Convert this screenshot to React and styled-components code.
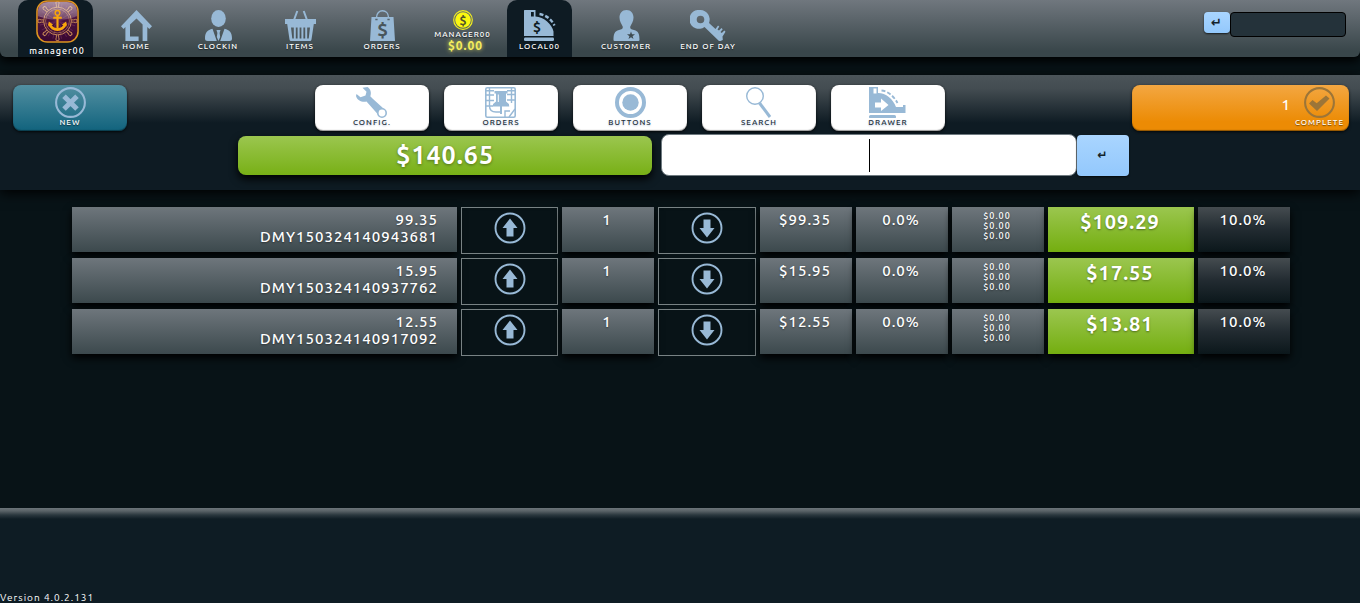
import React from 'react';
import styled, { createGlobalStyle, css } from 'styled-components';

const GlobalStyle = createGlobalStyle`
  * { box-sizing: border-box; }
  html, body, #root { height: 100%; }
  body {
    margin: 0;
    background: #081317;
    color: #fff;
    font-family: Ubuntu, "Noto Sans", "Open Sans", sans-serif;
    font-size: 15px;
    letter-spacing: 1px;
  }
  button, input { font: inherit; letter-spacing: inherit; }
  svg { display: block; }
`;

const ICE = '#98b9d6';

const Page = styled.div`
  min-height: 100%;
  display: flex;
  flex-direction: column;
`;

const Header = styled.header`
  display: flex;
  height: 57px;
  padding-left: 18px;
  background: linear-gradient(#70777e, #39464a 90%);
  border-radius: 0 0 6px 6px;
  box-shadow: 0 4px 10px #000;
`;

const Caption = styled.span`
  font-size: 8px;
  line-height: 10px;
  font-weight: 500;
  white-space: nowrap;
  text-transform: uppercase;
  text-shadow: 0 1px 1px rgba(0, 0, 0, 0.5);
`;

const UserTab = styled.a`
  width: 75px;
  padding-left: 3px;
  margin-right: 2px;
  display: flex;
  flex-direction: column;
  align-items: center;
  gap: 2px;
  background: #0e1b23;
  border-radius: 10px 10px 0 0;
  color: #fff;
  text-decoration: none;
  ${Caption} { font-size: 9px; line-height: 12px; text-transform: none; }
`;

const Nav = styled.nav`
  display: flex;
`;

const navKinds = {
  link: css`
    width: 82px;
    gap: 1px;
  `,
  cash: css`
    width: 79px;
  `,
  active: css`
    width: 65px;
    gap: 1px;
    margin: 0 13px 0 5px;
    background: #0e1b23;
  `,
};

const NavItem = styled.a`
  padding-top: 10px;
  display: flex;
  flex-direction: column;
  align-items: center;
  color: #fff;
  text-decoration: none;
  border-radius: 10px 10px 0 0;
  ${(p) => navKinds[p.$kind]}
`;

const Cash = styled.span`
  font-size: 12px;
  line-height: 12px;
  font-weight: 700;
  color: #f5ee5c;
  text-shadow: 0 0 4px #e8e060;
  margin-left: 6px;
`;

const QuickEntry = styled.form`
  display: flex;
  align-items: flex-start;
  margin: 12px 14px 0 auto;
`;

const EnterButton = styled.button`
  width: ${(p) => (p.$large ? 52 : 26)}px;
  height: ${(p) => (p.$large ? 41 : 21)}px;
  padding: 0;
  border: 0;
  border-radius: 4px;
  background: linear-gradient(#a9d5ff, #93c8fc);
  box-shadow: 0 1px 2px rgba(0, 0, 0, 0.7);
  color: #14232b;
  font-family: "DejaVu Sans", sans-serif;
  font-weight: 700;
  font-size: ${(p) => (p.$large ? 12 : 13)}px;
  line-height: 20px;
`;

const QuickInput = styled.input`
  width: 116px;
  height: 25px;
  padding: 0 6px;
  border: 1px solid #000;
  border-radius: 4px;
  background: #24323a;
  color: #fff;
`;

const Panel = styled.section`
  margin-top: 18px;
  height: 115px;
  padding-top: 10px;
  background: linear-gradient(#4b5459, #434c51 14px, #0e1b23 48px);
  box-shadow: 0 3px 12px #000;
`;

const Actions = styled.div`
  display: flex;
  padding: 0 11px 0 13px;
`;

const ToolGroup = styled.div`
  display: flex;
  gap: 15px;
  margin-left: 188px;
`;

const tones = {
  white: css`
    background: #fff;
    color: #23303c;
    ${Caption} { text-shadow: 0 1px 2px #bcc8dc; }
  `,
  teal: css`
    background: linear-gradient(#528fa1, #11637d);
    color: #fff;
  `,
  orange: css`
    background: linear-gradient(#f3a742, #ec8b04 80%);
    color: #fff;
  `,
};

const ActionButton = styled.button`
  width: ${(p) => (p.$wide ? 217 : 114)}px;
  height: 46px;
  margin-left: ${(p) => (p.$wide ? 'auto' : '0')};
  padding: 2px ${(p) => (p.$wide ? 5 : 0)}px 0 0;
  display: flex;
  align-items: flex-start;
  justify-content: ${(p) => (p.$wide ? 'flex-end' : 'center')};
  gap: 4px;
  border: 0;
  border-radius: 8px;
  box-shadow: 0 1px 3px rgba(0, 0, 0, 0.8), inset 0 -1px 1px rgba(0, 0, 0, 0.4);
  ${(p) => tones[p.$tone]}
`;

const Stack = styled.span`
  display: flex;
  flex-direction: column;
  align-items: center;
`;

const Count = styled.span`
  line-height: 36px;
  font-weight: 500;
`;

const Entry = styled.form`
  display: flex;
  gap: 9px;
  align-items: center;
  margin: 3px 17% 0 17.5%;
`;

const Total = styled.output`
  flex: 1;
  height: 39px;
  border-radius: 8px;
  background: linear-gradient(#9bc64f, #78b016);
  box-shadow: 0 4px 8px #000;
  text-align: center;
  font-size: 25px;
  line-height: 38px;
  font-weight: 600;
  text-shadow: 0 1px 3px rgba(0, 0, 0, 0.4);
`;

const ScanGroup = styled.div`
  flex: 1 1 53px;
  display: flex;
  align-items: center;
`;

const ScanInput = styled.input`
  flex: 1;
  min-width: 0;
  height: 42px;
  border: 1px solid #6f7a80;
  border-radius: 8px;
  background: linear-gradient(#000, #000) center / 1px 33px no-repeat #fff;
  text-align: center;
  font-size: 25px;
`;

const Main = styled.main`
  flex: 1;
  padding: 13px 66px 0 68px;
`;

const Lines = styled.table`
  width: 100%;
  table-layout: fixed;
  border-collapse: separate;
  border-spacing: 4px;
  text-align: center;
  line-height: 17px;
  font-weight: 500;
`;

const Col = styled.col`
  width: ${(p) => p.$w}px;
`;

const Td = styled.td`
  padding: 0;
  vertical-align: top;
`;

const fills = {
  gray: 'linear-gradient(#6e767c, #3c494d)',
  green: 'linear-gradient(#9bc64f, #74ae10)',
  dark: 'linear-gradient(#454c50, #222b31 50%, #0b171b)',
};

const Cell = styled.div`
  height: 45px;
  padding: 4px ${(p) => (p.$end ? 19 : 2)}px 0 0;
  text-align: ${(p) => (p.$end ? 'right' : 'center')};
  background: ${(p) => fills[p.$fill || 'gray']};
  box-shadow: 0 4px 8px #000;
  text-shadow: 0 1px 2px rgba(0, 0, 0, 0.4);
`;

const Small = styled.div`
  font-size: 9px;
  line-height: 10px;
`;

const Amount = styled.strong`
  display: block;
  font-size: 20px;
  line-height: 22px;
  font-weight: 600;
`;

const StepButton = styled.button`
  width: 100%;
  height: 47px;
  padding: 4px 0 0;
  display: flex;
  justify-content: center;
  align-items: flex-start;
  border: 1px solid #788284;
  background: transparent;
`;

const Footer = styled.footer`
  height: 95px;
  display: flex;
  align-items: flex-end;
  background: linear-gradient(#6c757a, #596267 3px, #2a373e 7px, #0e1c24 11px);
  font-size: 10px;
  line-height: 10px;
`;

function Icon({ w = 31, h = 31, children }) {
  return (
    <svg width={w} height={h} viewBox={`0 0 ${w} ${h}`} fill={ICE} aria-hidden="true">
      {children}
    </svg>
  );
}

const Dollar = ({ x, y, size, fill }) => (
  <text x={x} y={y} fontSize={size} fontWeight="700" textAnchor="middle" letterSpacing="0" fill={fill}>$</text>
);

const HomeIcon = () => (
  <Icon>
    <path d="M15.5 0 31 16.3 28.3 19 26.3 17V31H21.6V14.6L15.5 8.4 9 14.6V26.5H17.6V31H4.4V17L2.6 19 0 16.3Z" />
  </Icon>
);

const ClerkIcon = () => (
  <Icon>
    <ellipse cx="15.5" cy="8.5" rx="7.3" ry="8.5" />
    <path d="M9.5 18.8 13.8 31H4.5Q2 31 2 28.5C2 22.5 4.5 20 9.5 18.8ZM21.5 18.8 17.2 31H26.5Q29 31 29 28.5C29 22.5 26.5 20 21.5 18.8ZM13.5 20H17.5L16.6 23 17.2 27 15.5 31 13.8 27 14.4 23Z" />
  </Icon>
);

const BasketIcon = () => (
  <Icon>
    <path d="M9 10 12.3 1M22 10 18.7 1" stroke={ICE} strokeWidth="2" />
    <path fillRule="evenodd" d="M0 9H31V14H28.8L26.5 29.5Q26.2 31 25 31H6Q4.8 31 4.5 29.5L2.2 14H0ZM6 17.5 7.3 28.5H8.8V17.5ZM10.8 17.5V28.5H12.6V17.5ZM14.6 17.5V28.5H16.4V17.5ZM18.4 17.5V28.5H20.2V17.5ZM22.2 17.5V28.5H23.7L25 17.5Z" />
  </Icon>
);

const BagIcon = () => (
  <Icon>
    <path d="M9.5 10V7.5C9.5-1.5 21.5-1.5 21.5 7.5V10" fill="none" stroke={ICE} strokeWidth="1.4" />
    <path d="M4.5 7H26.5L28 31H3Z" />
    <path d="M8.3 9.5H10.6M20.4 9.5H22.7" stroke="#56636a" strokeWidth="1.5" />
    <Dollar x={15.5} y={26} size={19} fill="#49565c" />
  </Icon>
);

const CoinIcon = () => (
  <Icon w={20} h={20}>
    <circle cx="10" cy="10" r="9.3" fill="none" stroke="#f0ec20" strokeWidth="1.2" />
    <circle cx="10" cy="10" r="7.8" fill="#fbf710" />
    <Dollar x={10} y={14.5} size={12.5} fill="#4f5228" />
  </Icon>
);

const RegisterIcon = () => (
  <Icon w={33}>
    <path fillRule="evenodd" d="M1.5 0H12.5V6.5C21 7 29 14.5 30.5 21.5V26H1V.5ZM8 2V6.5H10.8V2Z" />
    <rect x="1" y="27.5" width="30" height="3.5" rx="1.2" />
    <path d="M16.5 4C23 5 28 9 31.5 15.5" fill="none" stroke={ICE} strokeWidth="2.4" strokeDasharray="4 2" />
    <Dollar x={14} y={22} size={14} fill="#0e1b23" />
  </Icon>
);

const CustomerIcon = () => (
  <Icon>
    <path d="M15.5 0C20 0 22.5 3.5 22.5 7.5 22.5 11.5 20.5 13.5 19.3 16.5 18.8 19 20.5 19.5 23 20 27.5 21 28.5 24 28.5 30Q28.5 31 27.5 31H3.5Q2.5 31 2.5 30C2.5 24 3.5 21 8 20 10.5 19.5 12.2 19 11.7 16.5 10.5 13.5 8.5 11.5 8.5 7.5 8.5 3.5 11 0 15.5 0Z" />
    <path fill="#3f4c52" d="M20 21.5 21 24.3H24L21.6 26.2 22.5 29 20 27.3 17.5 29 18.4 26.2 16 24.3H19Z" />
  </Icon>
);

const KeyIcon = () => (
  <Icon w={36}>
    <path fillRule="evenodd" d="M10.5 0A9.5 9.5 0 0 1 19 13L25.5 19 28 15.5 29.3 16.6 27.5 19.5 29 20.5 31.5 18 32.7 19.2 30.5 22 31.8 23 34.3 20.5 35.5 21.8 32.5 26.5 32.8 30 30.5 31H29L14.5 17A9.5 9.5 0 1 1 10.5 0ZM10.5 5.7A3.8 3.8 0 1 0 10.5 13.3 3.8 3.8 0 1 0 10.5 5.7Z" />
  </Icon>
);

const CrossIcon = () => (
  <Icon>
    <circle cx="15.5" cy="15.5" r="14.4" fill="none" stroke={ICE} strokeWidth="2.1" />
    <path d="M9 9.2 22 22M22 9.2 9 22" stroke={ICE} strokeWidth="5" />
  </Icon>
);

const WrenchIcon = () => (
  <Icon>
    <path d="M6.5.8 11.5 0C14.5 2 15.7 5.5 14.3 9.3L16.5 11.5 27.5 21.5 22 27.5 10.5 14.5C6.5 15.7 1 13.5 0 9L.5 7 4.5 10.3 9.5 8.6 10.5 4.8Z" />
    <circle cx="26" cy="26" r="4.2" fill="#fff" stroke={ICE} strokeWidth="1.6" />
  </Icon>
);

const PinIcon = () => (
  <Icon>
    <g fill="none" stroke={ICE}>
      <rect x=".8" y=".8" width="29.4" height="29.4" rx="1.5" strokeWidth="1.6" />
      <path d="M1 3.8H9M22 3.8H30M4.5 1V19Q4.5 25 11 25H16M26.5 1V16M1 8H9M1 13.5H9M1 19H8M22 7.5H30M22 13H30M20 30V24H25M24 30 30 22" strokeWidth="1.4" />
    </g>
    <path d="M9.5 4H22.5V6.5H21V14.5Q24 16 24.3 19.5H7.7Q8 16 11 14.5V6.5H9.5ZM15 19H17V27H15Z" />
    <path d="M13.3 7.5V15" stroke="#fff" strokeWidth="1" />
  </Icon>
);

const TargetIcon = () => (
  <Icon>
    <circle cx="15.5" cy="15.5" r="13.5" fill="none" stroke={ICE} strokeWidth="4" />
    <circle cx="15.5" cy="15.5" r="8.2" />
  </Icon>
);

const SearchIcon = () => (
  <Icon>
    <circle cx="12" cy="9" r="8.3" fill="none" stroke={ICE} strokeWidth="1.4" />
    <path d="M16.5 16 27 30" stroke={ICE} strokeWidth="3" />
  </Icon>
);

const DrawerIcon = () => (
  <Icon w={37}>
    <path fillRule="evenodd" d="M0 0H9V6C17 6 24 12 27 20H34V18H36.5V26H0ZM4.5 1.5V6.5H7.5V1.5ZM6 15.5V20.5H12V24L19.5 18 12 11.5V15.5Z" />
    <rect x="0" y="28" width="27" height="3.5" rx="1.5" />
    <path d="M12.5 3.5C19 4 25 9.5 28.5 16" fill="none" stroke={ICE} strokeWidth="1.8" strokeDasharray="4 2" />
  </Icon>
);

const CheckIcon = () => (
  <Icon>
    <circle cx="15.5" cy="15.5" r="14.4" fill="none" stroke="#9c7538" strokeWidth="2.1" />
    <path fill="#9c7538" d="M5 16.5 8.5 13 12.7 16.2 22 8.5 25.5 11.5 13 24Z" />
  </Icon>
);

const ArrowIcon = ({ down }) => (
  <Icon w={32} h={32}>
    <circle cx="16" cy="16" r="14.5" fill="none" stroke={ICE} strokeWidth="1.9" />
    <path d={down ? 'M12.5 7.5H19.5V16H23.5L16 25.5 8.5 16H12.5Z' : 'M12.5 24.5H19.5V16H23.5L16 6.5 8.5 16H12.5Z'} />
  </Icon>
);

function Logo() {
  const spokes = [0, 45, 90, 135, 180, 225, 270, 315];
  return (
    <svg width="45" height="45" viewBox="0 0 45 45" aria-hidden="true">
      <defs>
        <linearGradient id="plum" x2="0" y2="1">
          <stop offset="0" stopColor="#5a2048" />
          <stop offset="1" stopColor="#380630" />
        </linearGradient>
        <linearGradient id="gloss" x2="0" y2="1">
          <stop offset="0" stopColor="#fff" stopOpacity=".5" />
          <stop offset="1" stopColor="#fff" stopOpacity=".2" />
        </linearGradient>
      </defs>
      <rect x="1" y="1" width="43" height="43" rx="11" fill="url(#plum)" />
      <g stroke="#7b3568" strokeWidth="1" opacity=".5">
        {spokes.map((a) => (
          <path key={a} d="M22.5 22V3M22.5 22 28 4" transform={`rotate(${a + 15} 22.5 22)`} />
        ))}
      </g>
      <g fill="none" stroke="#c98a58" strokeWidth="1">
        <circle cx="22.5" cy="22" r="14.5" />
        <circle cx="22.5" cy="22" r="12.5" strokeWidth=".6" />
        {spokes.map((a) => (
          <path key={a} d="M21.3 7.5V5Q20.3 3 21.3 1.5H23.7Q24.7 3 23.7 5V7.5" transform={`rotate(${a} 22.5 22)`} />
        ))}
      </g>
      <path d="M2 13Q2 2 13 2H32Q43 2 43 13V17Q22.5 24 2 17Z" fill="url(#gloss)" />
      <g fill="none" stroke="#f9a60c">
        <circle cx="22.5" cy="13.5" r="2.4" strokeWidth="1.6" />
        <path d="M22.5 16V30M18 18.5H27" strokeWidth="2.2" />
        <path d="M14.5 25C16 33 29 33 30.5 25" strokeWidth="3" />
      </g>
      <path d="M12.5 27 13.5 22.5 18 26ZM32.5 27 31.5 22.5 27 26Z" fill="#f9a60c" />
      <rect x="1" y="1" width="43" height="43" rx="11" fill="none" stroke="#dd9420" strokeWidth="1.6" />
    </svg>
  );
}

const tools = [
  ['Config.', WrenchIcon],
  ['Orders', PinIcon],
  ['Buttons', TargetIcon],
  ['Search', SearchIcon],
  ['Drawer', DrawerIcon],
];

const lines = [
  { price: '99.35', code: 'DMY150324140943681', total: '$109.29' },
  { price: '15.95', code: 'DMY150324140937762', total: '$17.55' },
  { price: '12.55', code: 'DMY150324140917092', total: '$13.81' },
];

const columns = ['', 97, 92, 98, 92, 92, 92, 146, 92];

function NavLink({ label, icon: Glyph, active }) {
  return (
    <NavItem href="#" $kind={active ? 'active' : 'link'}>
      <Glyph />
      <Caption>{label}</Caption>
    </NavItem>
  );
}

function LineRow({ line }) {
  return (
    <tr>
      <Td><Cell $end>{line.price}<br />{line.code}</Cell></Td>
      <Td><StepButton type="button" aria-label="Increase quantity"><ArrowIcon /></StepButton></Td>
      <Td><Cell>1</Cell></Td>
      <Td><StepButton type="button" aria-label="Decrease quantity"><ArrowIcon down /></StepButton></Td>
      <Td><Cell>${line.price}</Cell></Td>
      <Td><Cell>0.0%</Cell></Td>
      <Td>
        <Cell>
          <Small>$0.00</Small>
          <Small>$0.00</Small>
          <Small>$0.00</Small>
        </Cell>
      </Td>
      <Td><Cell $fill="green"><Amount>{line.total}</Amount></Cell></Td>
      <Td><Cell $fill="dark">10.0%</Cell></Td>
    </tr>
  );
}

export default function App() {
  return (
    <Page>
      <GlobalStyle />
      <Header>
        <UserTab href="#">
          <Logo />
          <Caption>manager00</Caption>
        </UserTab>
        <Nav>
          <NavLink label="Home" icon={HomeIcon} />
          <NavLink label="Clockin" icon={ClerkIcon} />
          <NavLink label="Items" icon={BasketIcon} />
          <NavLink label="Orders" icon={BagIcon} />
          <NavItem href="#" $kind="cash">
            <CoinIcon />
            <Caption>manager00</Caption>
            <Cash>$0.00</Cash>
          </NavItem>
          <NavLink label="Local00" icon={RegisterIcon} active />
          <NavLink label="Customer" icon={CustomerIcon} />
          <NavLink label="End of day" icon={KeyIcon} />
        </Nav>
        <QuickEntry onSubmit={(e) => e.preventDefault()}>
          <EnterButton aria-label="Enter">↵</EnterButton>
          <QuickInput aria-label="Quick entry" />
        </QuickEntry>
      </Header>

      <Panel>
        <Actions>
          <ActionButton type="button" $tone="teal">
            <Stack><CrossIcon /><Caption>New</Caption></Stack>
          </ActionButton>
          <ToolGroup>
            {tools.map(([label, Glyph]) => (
              <ActionButton type="button" key={label} $tone="white">
                <Stack><Glyph /><Caption>{label}</Caption></Stack>
              </ActionButton>
            ))}
          </ToolGroup>
          <ActionButton type="button" $tone="orange" $wide>
            <Count>1</Count>
            <Stack><CheckIcon /><Caption>Complete</Caption></Stack>
          </ActionButton>
        </Actions>
        <Entry onSubmit={(e) => e.preventDefault()}>
          <Total>$140.65</Total>
          <ScanGroup>
            <ScanInput aria-label="Scan or enter item" />
            <EnterButton $large aria-label="Add item">↵</EnterButton>
          </ScanGroup>
        </Entry>
      </Panel>

      <Main>
        <Lines>
          <colgroup>
            {columns.map((w, i) => (w ? <Col key={i} $w={w} /> : <col key={i} />))}
          </colgroup>
          <tbody>
            {lines.map((line) => <LineRow key={line.code} line={line} />)}
          </tbody>
        </Lines>
      </Main>

      <Footer>Version 4.0.2.131</Footer>
    </Page>
  );
}
